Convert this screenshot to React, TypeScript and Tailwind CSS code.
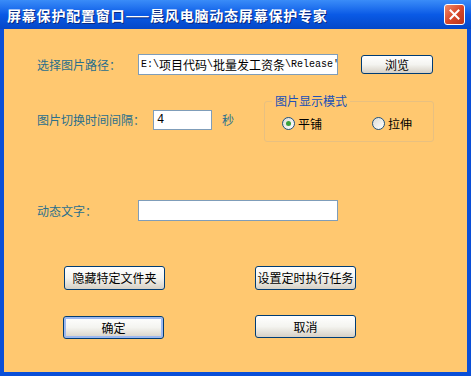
import React from "react";

const cjk = { fontFamily: '"Noto Sans CJK SC", "Liberation Sans", sans-serif' };
const mono = { fontFamily: '"Liberation Mono", monospace' };

function XPButton({ children, className = "", focused = false }: { children: React.ReactNode; className?: string; focused?: boolean }) {
  return (
    <div
      className={
        "flex items-center justify-center rounded-[3px] border border-[#003c74] bg-gradient-to-b from-[#ffffff] via-[#f4f4f0] to-[#d6d0c5] text-[12px] text-black leading-none whitespace-nowrap " +
        (focused ? "shadow-[inset_0_0_0_2px_#9cb8f0] " : "") +
        className
      }
      style={cjk}
    >
      {children}
    </div>
  );
}

export default function App() {
  return (
    <div className="w-[471px] h-[376px] flex flex-col bg-[#0a4fd8] overflow-hidden" style={cjk}>
      {/* title bar */}
      <div className="h-[29px] shrink-0 flex items-center pl-[7px] pr-[6px] bg-gradient-to-b from-[#3a8cf8] via-[#0a5ae6] to-[#0447c8]">
        <span className="text-white font-bold text-[14px] leading-none tracking-[0.8px] whitespace-nowrap [text-shadow:1px_1px_0_#0a2a80]">
          屏幕保护配置窗口——晨风电脑动态屏幕保护专家
        </span>
        <div className="ml-auto w-[21px] h-[21px] rounded-[3px] border border-white bg-gradient-to-br from-[#f08a6a] via-[#d9482a] to-[#b8341c] flex items-center justify-center">
          <svg width="11" height="11" viewBox="0 0 11 11">
            <path d="M1.5 1.5 L9.5 9.5 M9.5 1.5 L1.5 9.5" stroke="white" strokeWidth="2" strokeLinecap="square" />
          </svg>
        </div>
      </div>
      {/* body */}
      <div className="flex-1 mx-[4px] mb-[4px] bg-[#ffc870] flex flex-col pl-[33px] text-[12px] text-[#2a6f8c] leading-none">
        {/* row 1 */}
        <div className="mt-[25px] flex items-center h-[21px]">
          <span className="w-[101px] whitespace-nowrap">选择图片路径：</span>
          <div className="w-[200px] h-[21px] bg-white border border-[#7f9db9] flex items-center pl-[2px] text-black text-[12px] overflow-hidden whitespace-nowrap">
            <span className="text-[10px]" style={mono}>E:\</span>
            <span>项目代码</span>
            <span className="text-[10px]" style={mono}>\</span>
            <span>批量发工资条</span>
            <span className="text-[10px]" style={mono}>\Release'</span>
          </div>
          <XPButton className="ml-[23px] w-[72px] h-[19px]">浏览</XPButton>
        </div>
        {/* row 2 */}
        <div className="mt-[26px] flex items-start">
          <div className="flex items-center h-[20px] mt-[9px]">
            <span className="w-[116px] whitespace-nowrap">图片切换时间间隔：</span>
            <div className="w-[59px] h-[20px] bg-white border border-[#7f9db9] flex items-center pl-[3px] text-black" style={mono}>
              4
            </div>
            <span className="ml-[10px]">秒</span>
          </div>
          <div className="ml-[30px] relative w-[170px] h-[41px] border border-[#e8c080] rounded-[3px] shrink-0">
            <span className="absolute -top-[7px] left-[7px] px-[3px] bg-[#ffc870] text-[#2050b8] whitespace-nowrap">图片显示模式</span>
            <div className="flex items-center mt-[15px] ml-[17px] whitespace-nowrap">
              <div className="w-[13px] h-[13px] shrink-0 rounded-full border border-[#1c5180] bg-gradient-to-br from-[#dcdcd6] to-white flex items-center justify-center">
                <div className="w-[5px] h-[5px] rounded-full bg-[#3aa03a]" />
              </div>
              <span className="ml-[3px] text-black">平铺</span>
              <div className="ml-[50px] w-[13px] h-[13px] shrink-0 rounded-full border border-[#1c5180] bg-gradient-to-br from-[#dcdcd6] to-white" />
              <span className="ml-[3px] text-black">拉伸</span>
            </div>
          </div>
        </div>
        {/* row 3 */}
        <div className="mt-[58px] flex items-center h-[21px]">
          <span className="w-[101px] whitespace-nowrap">动态文字：</span>
          <div className="w-[200px] h-[21px] bg-white border border-[#7f9db9]" />
        </div>
        {/* row 4 */}
        <div className="mt-[45px] flex items-center">
          <XPButton className="ml-[27px] w-[101px] h-[24px]">隐藏特定文件夹</XPButton>
          <XPButton className="ml-[90px] w-[101px] h-[24px]">设置定时执行任务</XPButton>
        </div>
        {/* row 5 */}
        <div className="mt-[25px] flex items-start">
          <XPButton focused className="ml-[26px] mt-[1px] w-[101px] h-[23px]">确定</XPButton>
          <XPButton className="ml-[91px] w-[101px] h-[23px]">取消</XPButton>
        </div>
      </div>
    </div>
  );
}
